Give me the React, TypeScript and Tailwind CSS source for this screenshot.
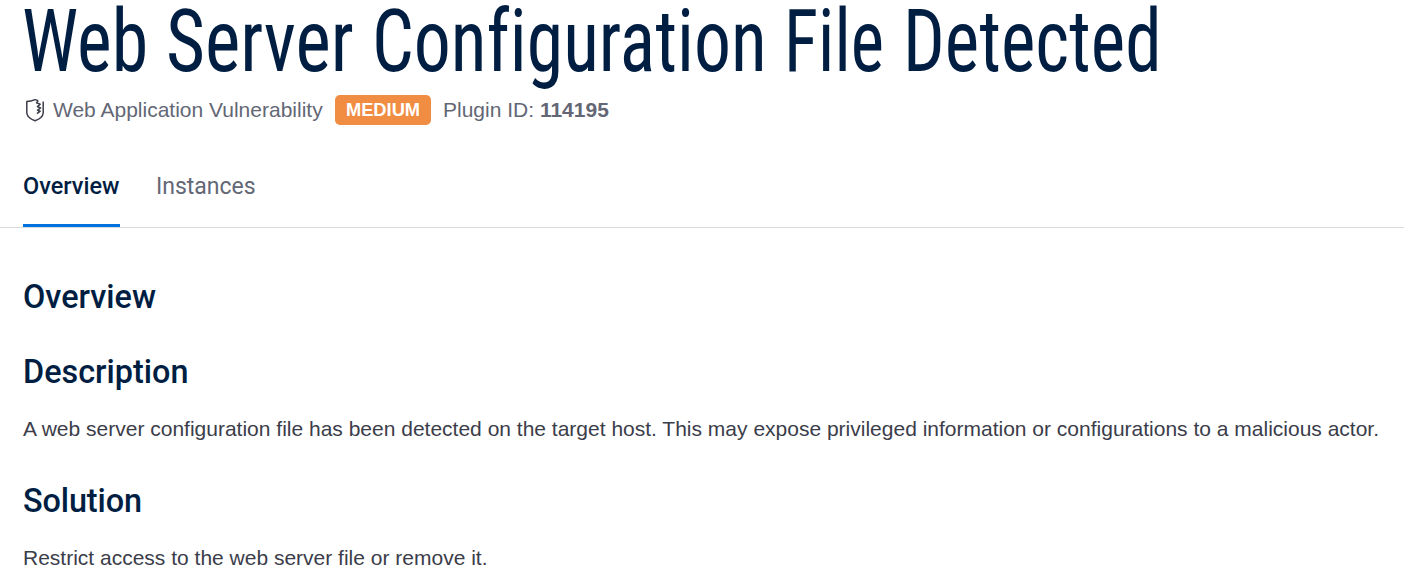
import type { ReactNode } from 'react';

function ShieldIcon() {
  return (
    <svg className="h-6 w-5 shrink-0" viewBox="0 0 20 24" fill="none" stroke="#3b3d4a" strokeWidth="1.5" strokeLinejoin="round">
      <path d="M13.2 2.6 10 1.6 Q6 3.3 1.8 3.6 V15 Q2.4 20 10 22.8 Q17.8 20 18.2 15 V3.4" />
      <path d="M13.2 2.6 11.6 4.8 15.2 6.2 12.4 8.6 15.6 10 12.6 12.2 15.2 13.2 12 15.6" />
    </svg>
  );
}

function Heading({ children, className }: { children: ReactNode; className: string }) {
  return (
    <h2 className={`font-['Roboto',sans-serif] text-[32.4px] leading-10 font-medium text-[#001e42] ${className}`}>
      {children}
    </h2>
  );
}

export default function App() {
  return (
    <div className="h-[585px] w-full overflow-hidden bg-white font-['Liberation_Sans',sans-serif] text-[21px] text-[#3b3d4a]">
      <h1 className="flex h-[82px] pl-[22px] font-['Roboto_Condensed','Roboto',sans-serif] text-[88px] leading-[81px] font-normal whitespace-nowrap text-[#001e42] [font-variant-ligatures:none]">
        <span className="w-[143.7px] shrink-0"><span className="inline-block origin-left scale-x-[0.839]">Web</span></span>{' '}
        <span className="w-[206.5px] shrink-0"><span className="inline-block origin-left scale-x-[0.855]">Server</span></span>{' '}
        <span className="w-[412.3px] shrink-0"><span className="inline-block origin-left scale-x-[0.838]">Configuration</span></span>{' '}
        <span className="w-[118.3px] shrink-0"><span className="inline-block origin-left scale-x-[0.806]">File</span></span>{' '}
        <span className="w-[260px] shrink-0"><span className="inline-block origin-left scale-x-[0.833]">Detected</span></span>
      </h1>

      <div className="mt-[13px] flex h-[30px] items-center pl-[25px] text-[#636775]">
        <ShieldIcon />
        <span className="ml-2 w-[270px] whitespace-nowrap">Web Application Vulnerability</span>
        <span className="ml-3 flex h-[30px] w-24 items-center justify-center rounded-[5px] bg-[#f18c43] text-[18.3px] font-bold text-white">
          MEDIUM
        </span>
        <span className="ml-3 whitespace-nowrap">
          Plugin ID: <strong>114195</strong>
        </span>
      </div>

      <nav className="mt-[23px] flex h-20 gap-9 border-b border-[#d9dadd] pl-[23px] font-['Roboto',sans-serif] leading-[76px]">
        <a className="h-[79px] w-[97px] border-b-[3px] border-[#0071dd] text-[23.5px] font-medium text-[#001e42]">Overview</a>
        <a className="text-[23px] leading-[78px] text-[#636775]">Instances</a>
      </nav>

      <main className="pl-[23px] whitespace-nowrap">
        <Heading className="mt-[49px]">Overview</Heading>
        <Heading className="mt-[35px]">Description</Heading>
        <p className="mt-[21px] leading-8">
          A web server configuration file has been detected on the target host. This may expose privileged information or
          configurations to a malicious actor.
        </p>
        <Heading className="mt-9 tracking-[-0.1px]">Solution</Heading>
        <p className="mt-[21px] leading-8">Restrict access to the web server file or remove it.</p>
      </main>
    </div>
  );
}
